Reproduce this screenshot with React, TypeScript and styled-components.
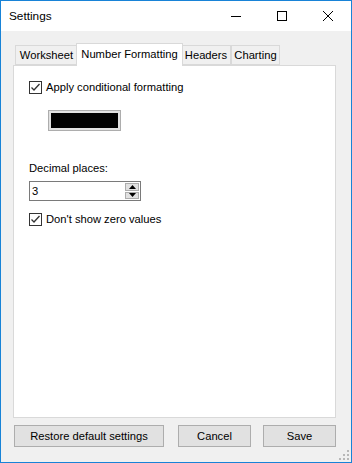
import React, { useState } from "react";
import styled, { createGlobalStyle } from "styled-components";

const GlobalStyle = createGlobalStyle`
  html, body {
    margin: 0;
    padding: 0;
    background: #ffffff;
  }
  * {
    box-sizing: border-box;
  }
`;

const Window = styled.div`
  width: 352px;
  height: 463px;
  border: 1px solid #1883d7;
  display: flex;
  flex-direction: column;
  font-family: "Liberation Sans", Arial, sans-serif;
  font-size: 11.2px;
  color: #000;
  position: relative;
`;

const TitleBar = styled.div`
  height: 30px;
  background: #fff;
  display: flex;
  align-items: center;
`;

const Title = styled.div`
  flex: 1;
  padding-left: 8px;
  font-size: 11.8px;
`;

const CaptionButton = styled.div`
  width: 46px;
  height: 30px;
  display: flex;
  align-items: center;
  justify-content: center;
`;

const Body = styled.div`
  flex: 1;
  background: #f0f0f0;
  padding: 12px 15px 0 12px;
  display: flex;
  flex-direction: column;
`;

const TabStrip = styled.div`
  display: flex;
  align-items: flex-end;
  height: 22px;
  padding-left: 2px;
  position: relative;
  z-index: 1;
`;

const Tab = styled.div<{ $active?: boolean; $w: number }>`
  width: ${(p) => p.$w}px;
  height: ${(p) => (p.$active ? "23px" : "20px")};
  margin-bottom: ${(p) => (p.$active ? "-1px" : "0")};
  padding-top: ${(p) => (p.$active ? "4px" : "3px")};
  margin-left: ${(p) => (p.$active ? "-2px" : "0")};
  margin-right: ${(p) => (p.$active ? "-2px" : "0")};
  border: 1px solid #d9d9d9;
  border-bottom: ${(p) => (p.$active ? "none" : "1px solid #d9d9d9")};
  background: ${(p) => (p.$active ? "#fff" : "#f0f0f0")};
  text-align: center;
  white-space: nowrap;
  position: relative;
  z-index: ${(p) => (p.$active ? 2 : 1)};
`;

const Panel = styled.div`
  height: 353px;
  background: #fff;
  border: 1px solid #d9d9d9;
  padding: 14px 15px 0 15px;
  display: flex;
  flex-direction: column;
  align-items: flex-start;
`;

const CheckRow = styled.label<{ $top?: number }>`
  display: flex;
  align-items: center;
  gap: 4px;
  margin-top: ${(p) => p.$top ?? 0}px;
  cursor: default;
  line-height: 14px;
`;

const Box = styled.span`
  width: 13px;
  height: 13px;
  border: 1px solid #333;
  background: #fff;
  display: flex;
  align-items: center;
  justify-content: center;
`;

const ColorSwatch = styled.div`
  width: 73px;
  height: 21px;
  margin-top: 16px;
  margin-left: 19px;
  border: 1px solid #adadad;
  background: #e1e1e1;
  padding: 2px;
`;

const SwatchFill = styled.div`
  width: 100%;
  height: 100%;
  background: #000;
`;

const FieldLabel = styled.div`
  margin-top: 30px;
  line-height: 14px;
`;

const Spinner = styled.div`
  margin-top: 6px;
  width: 112px;
  height: 20px;
  border: 1px solid #7a7a7a;
  display: flex;
  align-items: stretch;
  background: #fff;
`;

const SpinInput = styled.div`
  flex: 1;
  padding-left: 2px;
  line-height: 18px;
`;

const SpinButtons = styled.div`
  width: 15px;
  display: flex;
  flex-direction: column;
  padding: 1px 1px 1px 0;
  gap: 1px;
`;

const SpinButton = styled.div`
  flex: 1;
  background: #e1e1e1;
  border: 1px solid #adadad;
  display: flex;
  align-items: center;
  justify-content: center;
`;

const Footer = styled.div`
  display: flex;
  margin-top: 7px;
  padding-left: 1px;
`;

const Button = styled.div<{ $w: number; $gap?: number }>`
  width: ${(p) => p.$w}px;
  height: 22px;
  margin-left: ${(p) => p.$gap ?? 0}px;
  background: #e1e1e1;
  border: 1px solid #adadad;
  display: flex;
  align-items: center;
  justify-content: center;
  font-size: 11.2px;
`;

const Grip = styled.svg`
  position: absolute;
  right: 2px;
  bottom: 2px;
`;

const Check = () => (
  <svg width="11" height="11" viewBox="0 0 11 11">
    <polyline points="1.5,5.5 4,8 9.5,2" fill="none" stroke="#333" strokeWidth="1.3" />
  </svg>
);

const Arrow = ({ up }: { up?: boolean }) => (
  <svg width="7" height="4" viewBox="0 0 7 4">
    <polygon points={up ? "3.5,0 7,4 0,4" : "0,0 7,0 3.5,4"} fill="#000" />
  </svg>
);

const tabs = [
  { label: "Worksheet", w: 63 },
  { label: "Number Formatting", w: 107 },
  { label: "Headers", w: 50 },
  { label: "Charting", w: 49 },
];

export default function App() {
  const [active] = useState(1);
  return (
    <>
      <GlobalStyle />
      <Window>
        <TitleBar>
          <Title>Settings</Title>
          <CaptionButton>
            <svg width="10" height="10" viewBox="0 0 10 10">
              <line x1="0" y1="5.5" x2="10" y2="5.5" stroke="#000" strokeWidth="1" />
            </svg>
          </CaptionButton>
          <CaptionButton>
            <svg width="10" height="10" viewBox="0 0 10 10">
              <rect x="0.5" y="0.5" width="9" height="9" fill="none" stroke="#000" strokeWidth="1" />
            </svg>
          </CaptionButton>
          <CaptionButton>
            <svg width="10" height="10" viewBox="0 0 10 10">
              <path d="M0 0 L10 10 M10 0 L0 10" stroke="#000" strokeWidth="1" />
            </svg>
          </CaptionButton>
        </TitleBar>
        <Body>
          <TabStrip>
            {tabs.map((t, i) => (
              <Tab key={t.label} $w={t.w} $active={i === active}>
                {t.label}
              </Tab>
            ))}
          </TabStrip>
          <Panel>
            <CheckRow $top={0}>
              <Box>
                <Check />
              </Box>
              Apply conditional formatting
            </CheckRow>
            <ColorSwatch>
              <SwatchFill />
            </ColorSwatch>
            <FieldLabel>Decimal places:</FieldLabel>
            <Spinner>
              <SpinInput>3</SpinInput>
              <SpinButtons>
                <SpinButton>
                  <Arrow up />
                </SpinButton>
                <SpinButton>
                  <Arrow />
                </SpinButton>
              </SpinButtons>
            </Spinner>
            <CheckRow $top={11}>
              <Box>
                <Check />
              </Box>
              Don't show zero values
            </CheckRow>
          </Panel>
          <Footer>
            <Button $w={150}>Restore default settings</Button>
            <Button $w={73} $gap={14}>Cancel</Button>
            <Button $w={73} $gap={12}>Save</Button>
          </Footer>
        </Body>
        <Grip width="10" height="10" viewBox="0 0 10 10">
          <rect x="8" y="0" width="2" height="2" fill="#b8b8b8" />
          <rect x="4" y="4" width="2" height="2" fill="#b8b8b8" />
          <rect x="8" y="4" width="2" height="2" fill="#b8b8b8" />
          <rect x="0" y="8" width="2" height="2" fill="#b8b8b8" />
          <rect x="4" y="8" width="2" height="2" fill="#b8b8b8" />
          <rect x="8" y="8" width="2" height="2" fill="#b8b8b8" />
        </Grip>
      </Window>
    </>
  );
}
